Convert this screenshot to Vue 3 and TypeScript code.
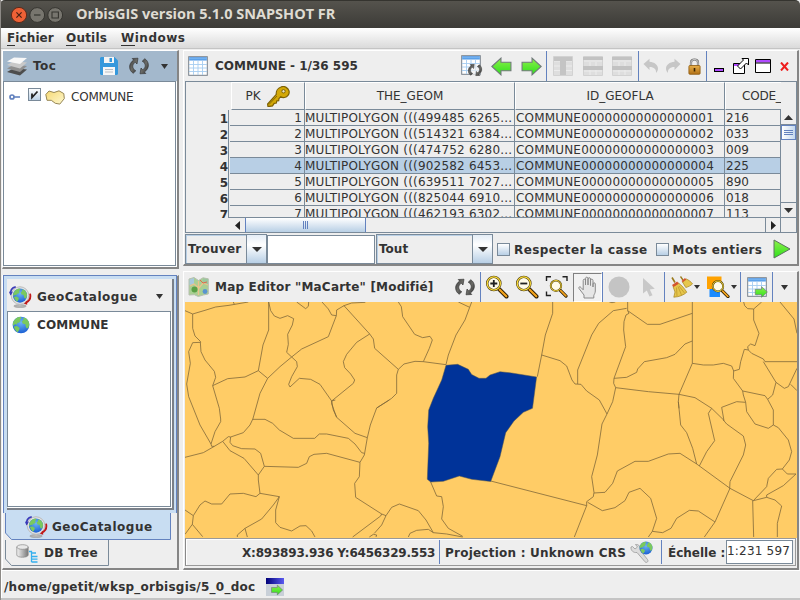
<script setup lang="ts">
interface Row {
  n: number
  geom: string
  id: string
  code: string
}

const rows: Row[] = [
  { n: 1, geom: '499485 6265', code: '216' },
  { n: 2, geom: '514321 6384', code: '033' },
  { n: 3, geom: '474752 6280', code: '009' },
  { n: 4, geom: '902582 6453', code: '225' },
  { n: 5, geom: '639511 7027', code: '890' },
  { n: 6, geom: '825044 6910', code: '018' },
  { n: 7, geom: '462193 6302', code: '113' },
].map((r) => ({
  n: r.n,
  geom: `MULTIPOLYGON (((${r.geom}...`,
  id: `COMMUNE0000000000000000${r.n}`,
  code: r.code,
}))

const selected = 4

// Boundary lines, one group per quadrant of the map, in thirds of a pixel.
const boundaries: { origin: string; lines: string[] }[] = [
  {
    origin: 'translate(180 265) scale(0.33333)',
    lines: [
      '15,137 38,147 75,136 107,126 147,121 205,111',
      '160,111 163,118',
      '38,147 38,190 45,213 61,229 62,232 38,233 26,260 31,295 20,357 26,395 60,480',
      '61,232 63,260 75,285 103,319 107,337 98,362 118,430 122,462',
      '98,362 143,341 195,336 235,317 263,340',
      '266,111 266,195 249,240 235,317',
      '266,111 272,137 283,153 300,160 323,152 341,161 337,180 323,208 325,238 320,262 335,276 350,290 352,305 335,335 326,358 330,366 358,340 392,343 420,358 455,408',
      '263,340 300,305 335,276 365,252 445,215 469,152 455,150 445,132 426,111',
      '263,340 240,385 218,464',
      '350,111 377,131 385,124 386,111',
      '469,152 470,135 492,122 515,114 556,112',
      '492,122 569,207 580,222 584,250 655,313 650,330 650,385 635,400 590,429 571,480',
      '569,207 530,232 500,268 490,290 494,308 512,327 524,345 520,355 455,408',
      '455,408 460,435 470,457',
      '655,313 672,297 705,289 730,290 798,299',
      '730,290 748,250 757,225 750,214 728,218 704,208 668,155 664,125 655,111',
      '835,111 869,127',
      '875,111 869,127 855,165 828,210 805,270 798,299',
    ],
  },
  {
    origin: 'translate(450 265) scale(0.33333)',
    lines: [
      '308,111 308,145 286,210 275,270 262,335',
      '275,270 330,287 350,303 366,345 375,357 393,358 410,378 448,405 471,447',
      '383,357 383,315 425,210 446,175 490,137 530,130',
      '533,111 533,137 592,178 630,178 727,145',
      '533,137 537,145 528,150 522,170 521,195 527,245 492,340 491,355 497,368 488,410 471,447',
      '478,111 486,113 496,111',
      '727,111 727,295',
      '492,340 530,337 560,322 563,312 583,290 650,278 675,268 705,237 727,228',
      '497,368 595,380 687,388',
      '727,295 687,388 685,410 687,430',
      '727,295 760,300 790,300 820,295 845,303 851,318 850,340 878,378 880,390 887,412',
      '687,388 735,398 785,430 822,466',
      '851,318 868,313 872,290 883,253 895,255 905,265 940,282 945,290 1041,290',
      '895,255 893,245 902,237 915,242 927,205 911,165 911,132 893,131 884,122 881,111',
      '911,132 935,111',
      '990,111 1032,162 1041,205',
      '940,290 978,352 1003,370 1015,365 1041,310',
      '1022,358 1041,377',
      '978,352 968,390 953,403',
      '878,378 945,392 953,403 970,435 970,480',
    ],
  },
  {
    origin: 'translate(180 400) scale(0.33333)',
    lines: [
      '60,75 93,132 105,95 122,65 122,57',
      '93,132 95,139 103,139 128,124 145,110 152,111 150,127 158,137 185,146 225,147 242,160 253,199 235,225 235,240 240,280',
      '15,172 70,158 103,139',
      '128,124 150,152 192,175 235,225',
      '152,111 190,98 210,75 218,58',
      '218,58 255,58 278,70 298,90 340,115 404,115 418,102 440,102 505,115 525,132 545,158 553,160',
      '253,199 355,202 380,190 388,170 402,163 440,160 540,187',
      '466,0 455,3 455,12 470,52 525,100 562,113',
      '571,75 562,113 553,165 540,187 538,230 524,250 527,292 605,342 618,347',
      '628,0 590,24',
      '15,330 40,347 37,373 15,403',
      '40,347 60,315 75,303 95,312 125,312 150,282 190,280 228,290 240,280 298,290',
      '37,373 68,410',
      '298,290 280,315 245,357 195,385 172,405 172,411',
      '195,385 202,411',
      '298,290 287,330 287,368 300,382 335,393 360,378 378,377 395,393 405,411',
      '518,411 602,348 605,342',
      '568,411 580,403 590,405 588,411',
      '583,400 605,375 618,347 635,322 658,312 715,332 738,360 760,398',
      '685,411 690,400 710,391 745,388 760,398 800,402 848,411',
      '752,246 770,288 785,290 790,320 785,357 805,385 848,409',
    ],
  },
  {
    origin: 'translate(480 400) scale(0.33333)',
    lines: [
      '32,243 320,317 283,411',
      '381,42 366,72 352,165 335,230 342,277 340,290 320,305 320,317',
      '342,279 375,277 398,250 412,213 465,184 505,184 565,162 600,160 650,192 750,265 820,302',
      '323,307 367,332 405,323 435,302 447,277 480,265 512,295 530,355 517,394 505,411',
      '517,394 548,398 573,385 590,355 628,331 655,333 705,366',
      '595,5 602,75 620,98 638,145 650,192',
      '658,198 680,155 704,122 685,40 695,25',
      '732,62 725,22 770,5 797,7 800,35 825,72 865,85 880,75',
      '730,60 740,72 790,108 797,135 790,165 750,245 749,267 705,366 673,411',
      '880,75 895,83 925,120 935,155 928,180 907,207 890,208 865,235 860,260 820,302',
      '907,207 922,222 948,222 910,257 860,285 860,292',
      '820,302 860,292 885,300 905,318 892,370 892,411',
      '818,302 821,411',
    ],
  },
]

const commune =
  '446,365.3 457.7,364.3 468.3,369.3 471.7,374.5 479,378.3 486,378.3 490,375 500,371.7 511.7,373 536.6,377 532.5,408.3 523.3,412.3 514,421 505.7,432.7 500,456.7 490.7,481.5 471.7,479.3 459.3,476 443.3,481.3 430.7,482 427.3,479.3 428.7,443.3 427.7,426.7 428.7,410 433.3,398.3 441.7,380'
</script>

<template>
  <div class="window">
    <svg class="defs" aria-hidden="true">
      <defs>
        <linearGradient id="gGreen" x1="0" y1="0" x2="0" y2="1">
          <stop offset="0" stop-color="#8df04a" /><stop offset="1" stop-color="#2ee01c" />
        </linearGradient>
        <linearGradient id="gDark" x1="0" y1="0" x2="1" y2="1">
          <stop offset="0" stop-color="#3a3a3a" /><stop offset=".5" stop-color="#6c6c68" /><stop offset="1" stop-color="#2c2c2c" />
        </linearGradient>
        <radialGradient id="gSea" cx=".5" cy=".35" r=".65">
          <stop offset="0" stop-color="#6db4f4" /><stop offset="1" stop-color="#1a5fd4" />
        </radialGradient>
        <linearGradient id="gPoly" x1="0" y1="0" x2="1" y2="1">
          <stop offset="0" stop-color="#f6d873" /><stop offset="1" stop-color="#fdf8d0" />
        </linearGradient>
        <linearGradient id="gBox" x1="0" y1="0" x2="0" y2="1">
          <stop offset="0" stop-color="#fff" /><stop offset="1" stop-color="#b8cfe5" />
        </linearGradient>
        <linearGradient id="gCyl" x1="0" y1="0" x2="1" y2="0">
          <stop offset="0" stop-color="#f4f4f4" /><stop offset="1" stop-color="#777" />
        </linearGradient>
        <linearGradient id="gNavy" x1="0" y1="0" x2="1" y2="0">
          <stop offset="0" stop-color="#000078" /><stop offset="1" stop-color="#5a5af0" />
        </linearGradient>
        <linearGradient id="gLock" x1="0" y1="0" x2="0" y2="1">
          <stop offset="0" stop-color="#e8b04a" /><stop offset="1" stop-color="#b06f16" />
        </linearGradient>
      </defs>
      <symbol id="refresh" viewBox="0 0 20 18">
        <g fill="url(#gDark)" stroke="#2f2f2f" stroke-width=".6">
          <path d="M9 1.200 3.200 1.500 4.600 3C1.800 5 .4 7.600.6 10.300c.2 2.400 1.500 4.600 3.600 6l2.600-2.500C4.900 12.900 3.900 11.400 3.800 9.600c-.1-1.800.8-3.400 2.400-4.400L8 7z" />
          <path d="m11 16.800 5.800-.3-1.400-1.500c2.800-2 4.200-4.600 4-7.300-.2-2.400-1.500-4.600-3.600-6l-2.600 2.500c1.900.9 2.900 2.400 3 4.200.1 1.800-.8 3.400-2.400 4.400L12 11z" />
        </g>
      </symbol>
      <symbol id="table" viewBox="0 0 20 20">
        <rect x=".7" y=".7" width="18.600" height="18.600" fill="#fff" stroke="#77808a" />
        <rect x="1.200" y="1.200" width="17.600" height="3.300" fill="#4b96e6" />
        <path d="M1.200 2.800h17.600" stroke="#83bcf3" />
        <path d="M1 8.500h18M1 12h18M1 15.500h18M5.500 5v14M10 5v14M14.500 5v14" stroke="#a6cdf0" stroke-width=".9" />
      </symbol>
      <symbol id="globe" viewBox="0 0 20 20">
        <circle cx="10" cy="10" r="9.300" fill="url(#gSea)" />
        <path d="M3 4.200C4.800 2 7 1 9.400.9l1.200 1.500-2 1.500 1 1.700-2 1.900-1.700.2-.6 2.100L3.600 9 1.300 11C.5 8.600 1.300 6 3 4.200zM2 11.700l3.600-.5 2.900 2-.6 2.400-1.600 2.400C4 16.700 2.600 14.500 2 11.700zM12.500 2l2.600.3c2.300 1.600 3.900 4 4.100 6.800l-.9 4-1.900.9-1.200-2.200-.4-2.600-2.700-.5-1.200-2.700 1.900-1.800z" fill="#7ac95e" />
      </symbol>
      <symbol id="catalog" viewBox="0 0 24 23">
        <ellipse cx="11.500" cy="21" rx="6.500" ry="1.600" fill="#b4b4b4" stroke="#8c8c8c" stroke-width=".5" />
        <path d="M10 17h3v4h-3z" fill="#bbb" />
        <circle cx="11.500" cy="10" r="9.200" fill="#e2e2e2" stroke="#b9b9b9" />
        <use href="#globe" x="3.500" y="2" width="16" height="16" />
        <path d="M2 9C.8 5 3 1.600 7 .9" fill="none" stroke="#3a3ab8" stroke-width="1.800" />
        <path d="M0 6h4L1.500 10z" fill="#3a3ab8" />
        <path d="M22 8c1 4-.5 7.500-4.500 9.500" fill="none" stroke="#c01818" stroke-width="1.900" />
        <path d="m15.500 18.500 3.500-3v4z" fill="#c01818" />
      </symbol>
      <symbol id="arrow" viewBox="0 0 20 18">
        <path d="M19.200 9 10.500 1v4H1v8h9.500v4z" fill="url(#gGreen)" stroke="#70777a" />
      </symbol>
      <symbol id="lens" viewBox="0 0 24 24">
        <path d="m14 14 7.500 7.500" stroke="#2a1c00" stroke-width="4" stroke-linecap="round" />
        <path d="m14.500 14.500 6.800 6.800" stroke="#f3a31c" stroke-width="2.200" stroke-linecap="round" />
        <circle cx="8.800" cy="8.500" r="6.600" fill="#fffbe8" stroke="#4a3b10" stroke-width="2.400" />
        <circle cx="8.800" cy="8.500" r="6.600" fill="none" stroke="#ffe03a" stroke-width="1.200" />
      </symbol>
      <symbol id="undo" viewBox="0 0 16 16">
        <path d="M.5 6 6.500.8v3c5 .2 8.500 3.200 8.500 7 0 1.500-.8 3-2 4.200.5-3.500-1.800-6-6.500-6v3z" fill="#c6c6c6" />
      </symbol>
      <symbol id="caret" viewBox="0 0 10 5" preserveAspectRatio="none"><path d="M0 0h10L5 5z" fill="#333" /></symbol>
    </svg>

    <header class="titlebar">
      <svg class="wm" viewBox="0 0 54 18">
        <circle cx="9" cy="9" r="7.600" fill="#ee6136" stroke="#5f2a1a" />
        <path d="m6.400 6.400 5.200 5.200m0-5.200-5.200 5.200" stroke="#472014" stroke-width="1.200" />
        <circle cx="27.200" cy="9" r="7.400" fill="#77756e" stroke="#35342f" />
        <path d="M24 9h6.500" stroke="#35342f" stroke-width="1.200" />
        <circle cx="45.200" cy="9" r="7.400" fill="#77756e" stroke="#35342f" />
        <path d="M42 6h6.400v6H42z" fill="none" stroke="#35342f" stroke-width="1.100" />
      </svg>
      <h1>OrbisGIS version 5.1.0 SNAPSHOT FR</h1>
    </header>

    <nav class="menubar">
      <span class="m1"><u>F</u>ichier</span><span class="m2"><u>O</u>utils</span><span class="m3"><u>W</u>indows</span>
    </nav>

    <main>
      <section class="side">
        <div class="panel toc">
          <div class="head active">
            <svg width="22" height="19" viewBox="0 0 22 19">
              <path d="m1 15 7-4 13 1.500-7 6z" fill="#4d4d4d" />
              <path d="m1 11.500 7-4 13 1.500-7 6z" fill="#8f8f8f" />
              <path d="m1 8 7-4 13 1.500-7 6z" fill="#c9c9c9" />
              <path d="m1 4.500 7-4L21 1l-7 6z" fill="#f8f8f8" />
            </svg>
            <b class="t-toc">Toc</b>
            <svg class="save" width="18" height="18" viewBox="0 0 18 18">
              <path d="M1 0h13.500L18 3.500V17l-1 1H1l-1-1V1z" fill="#3598dc" />
              <path d="M4 0h10v6H4z" fill="#f4f4f4" /><path d="M9.500 1h2.500v4H9.500z" fill="#3598dc" />
              <path d="M3 10h12v8H3z" fill="#f7f7f7" /><path d="M5 12.500h8M5 15h8" stroke="#b9bec4" />
            </svg>
            <svg class="ref" width="20" height="18"><use href="#refresh" /></svg>
            <svg class="car" width="7" height="5"><use href="#caret" /></svg>
          </div>
          <div class="list">
            <div class="tocrow">
              <svg width="12" height="8" viewBox="0 0 12 8">
                <circle cx="3" cy="4" r="2" fill="#fff" stroke="#6382bf" stroke-width="1.700" /><path d="M5 4h6" stroke="#6382bf" stroke-width="1.600" />
              </svg>
              <svg class="check" width="13" height="13" viewBox="0 0 13 13">
                <rect x=".5" y=".5" width="12" height="12" fill="url(#gBox)" stroke="#7a8a99" />
                <path d="M4 5.500v4L9.500 3.500" fill="none" stroke="#222" stroke-width="1.800" />
              </svg>
              <svg class="poly" width="20" height="15" viewBox="0 0 20 15">
                <path d="M.8 4.500 4 1l5 1.500L14 .8l4.800 2.800.5 5-4.500 5.500-4.500-.8-4-3H2z" fill="url(#gPoly)" stroke="#968654" />
              </svg>
              <span class="plain">COMMUNE</span>
            </div>
          </div>
        </div>

        <div class="panel dock">
          <div class="focus">
            <div class="inner">
              <div class="head">
                <svg width="23" height="22"><use href="#catalog" /></svg>
                <b class="t-geo">GeoCatalogue</b>
                <svg class="car2" width="7" height="5"><use href="#caret" /></svg>
              </div>
              <div class="list geo">
                <svg width="18" height="18"><use href="#globe" /></svg><b>COMMUNE</b>
              </div>
            </div>
          </div>
          <div class="tab first">
            <svg class="shape" width="166" height="27" viewBox="0 0 166 27"><path d="M.5 0v20l6 6.500H165.500V0" fill="#c8ddf2" stroke="#6382bf" /></svg>
            <svg class="ico" width="23" height="22"><use href="#catalog" /></svg><b class="t-geo">GeoCatalogue</b>
          </div>
          <div class="tab second">
            <svg class="shape" width="104" height="26" viewBox="0 0 104 26"><path d="M.5 0v19l6 6.500H103.500V0" fill="#eee" stroke="#7a8a99" /></svg>
            <svg class="ico" width="22" height="19" viewBox="0 0 22 19">
              <path d="M.8 3v8c0 3 11.400 3 11.400 0V3z" fill="url(#gCyl)" stroke="#888" stroke-width=".7" />
              <ellipse cx="6.500" cy="3" rx="5.700" ry="2.300" fill="#e8e8e8" stroke="#888" stroke-width=".7" />
              <path d="M13 7.500h2.500V18M15.500 9H20M15.500 12.500h6M15.500 15.200h6M15.500 18h6" fill="none" stroke="#35b0ee" stroke-width="1.300" />
            </svg>
            <b>DB Tree</b>
          </div>
        </div>
      </section>

      <section class="work">
        <div class="panel table">
          <div class="head thead">
            <svg class="i-tab" width="20" height="20"><use href="#table" /></svg>
            <b class="name">COMMUNE - 1/36 595</b>
            <svg width="22" height="22" viewBox="0 0 22 22">
              <use href="#table" width="20" height="20" />
              <circle cx="14.500" cy="15" r="6" fill="#eee" opacity=".7" /><use href="#refresh" x="6.500" y="8.500" width="15" height="13" />
            </svg>
            <svg class="flip" width="21" height="19"><use href="#arrow" /></svg>
            <svg width="21" height="19"><use href="#arrow" /></svg>
            <i class="sep" />
            <svg width="20" height="20" viewBox="0 0 20 20"><path d="M.5.5h19v19H.5z" fill="#dedede" stroke="#d2d2d2" /><path d="M1 5h18M1 10h18M1 14.500h18" stroke="#ececec" /><path d="M1 1h18v4H13v14H7V5H1z" fill="#c4c4c4" /></svg>
            <svg width="20" height="20" viewBox="0 0 20 20"><path d="M.5.5h19v19H.5z" fill="#dedede" stroke="#d2d2d2" /><path d="M1 5h18M1 15h18M7 6v13M13 6v13" stroke="#ececec" /><path d="M0 1h20v3H0zM0 10h20v4H0z" fill="#c2c2c2" /></svg>
            <svg width="20" height="20" viewBox="0 0 20 20"><path d="M.5.5h19v19H.5z" fill="#dedede" stroke="#d2d2d2" /><path d="M1 5h18M1 15h18M7 6v13M13 6v13" stroke="#ececec" /><path d="M0 1h20v3H0zM0 10h20v4H0z" fill="#c2c2c2" /></svg>
            <i class="sep" />
            <svg width="16" height="16"><use href="#undo" /></svg>
            <svg class="flip" width="16" height="16"><use href="#undo" /></svg>
            <svg width="13" height="17" viewBox="0 0 13 17">
              <path d="M3 9V4.500C3 .5 10 .5 10 4.500V9" fill="none" stroke="#6d6d6d" stroke-width="2.200" /><path d="M3 9V4.500C3 .5 10 .5 10 4.500V9" fill="none" stroke="#ddd" stroke-width="1" />
              <rect x=".9" y="7.500" width="11.200" height="8.800" rx="1" fill="url(#gLock)" stroke="#8d5a10" stroke-width=".8" />
              <path d="M6.500 10v3.500" stroke="#3a2400" stroke-width="1.600" />
            </svg>
            <i class="sep" />
            <svg class="min" width="10" height="5" viewBox="0 0 10 5"><rect x=".5" y=".5" width="9" height="3" fill="#b04aff" stroke="#000" /></svg>
            <svg width="16" height="16" viewBox="0 0 16 16"><path d="M.5 5.500h11v10H.5z" fill="#fff" stroke="#000" /><path d="M1 6h10v2H1z" fill="#b04aff" /><path d="M9 .5h6.500V7l-2-2-6 6-3-3 6-6z" fill="#fff" stroke="#000" /></svg>
            <svg width="16" height="14" viewBox="0 0 16 14"><path d="M.5.5h15v13H.5z" fill="#fff" stroke="#000" /><path d="M1 1h14v2.500H1z" fill="#b04aff" /><path d="M1 4h14" stroke="#000" /></svg>
            <svg width="9" height="9" viewBox="0 0 9 9"><path d="m1 .5 7 8M8 .5l-7 8" stroke="#ee1c1c" stroke-width="2" /></svg>
          </div>

          <div class="grid">
            <div class="corner" />
            <div class="cols">
              <div class="th">PK
                <svg width="23" height="21" viewBox="0 0 23 21">
                  <path d="M14 1c3-1.500 7 .5 8 3.800.8 3.200-1.500 6.200-4.500 6.700-1.500.2-2.800 0-3.800-.7l-1.800 1.900-.2 2-2 .3-.3 2-2.200.4-1.700 2.500-4.500.8L.6 18l8.700-9.600C8.800 5 11 2 14 1z" fill="#d3a806" stroke="#7d6104" stroke-width="1.200" /><circle cx="16.500" cy="5.300" r="1.700" fill="#e9e2c4" stroke="#7d6104" /><path d="m2 18.500 8-8.500" stroke="#8d6e04" />
                </svg>
              </div>
              <div class="th">THE_GEOM</div>
              <div class="th">ID_GEOFLA</div>
              <div class="th code">CODE_</div>
            </div>
            <div class="corner" />
            <div class="nums"><div v-for="r in rows" :key="r.n">{{ r.n }}</div></div>
            <div class="body">
              <div v-for="r in rows" :key="r.n" class="tr" :class="{ sel: r.n === selected }">
                <span class="num">{{ r.n }}</span><span class="g">{{ r.geom }}</span><span class="id">{{ r.id }}</span><span class="c">{{ r.code }}</span>
              </div>
            </div>
            <div class="vbar">
              <div class="ar up"><svg width="9" height="5"><use href="#caret" /></svg></div>
              <div class="vthumb"><i /><i /><i /></div>
              <div class="ar down"><svg width="9" height="5"><use href="#caret" /></svg></div>
            </div>
            <div class="corner" />
            <div class="hbar">
              <div class="har"><svg width="5" height="9" viewBox="0 0 5 9"><path d="M5 0v9L0 4.500z" fill="#222" /></svg></div>
              <div class="hthumb"><i /><i /><i /></div>
              <div class="har end"><svg width="5" height="9" viewBox="0 0 5 9"><path d="M0 0v9l5-4.500z" fill="#222" /></svg></div>
            </div>
            <div class="corner br" />
          </div>

          <div class="find">
            <div class="combo c1"><b>Trouver</b><span><svg width="10" height="5"><use href="#caret" /></svg></span></div>
            <div class="field" />
            <div class="combo c2"><b>Tout</b><span><svg width="10" height="5"><use href="#caret" /></svg></span></div>
            <i class="box" /><b class="t-case">Respecter la casse</b>
            <i class="box b2" /><b class="t-word">Mots entiers</b>
            <svg class="go" width="18" height="20" viewBox="0 0 18 20"><path d="M1 1v18l16-9z" fill="url(#gGreen)" stroke="#5c7260" /></svg>
          </div>
        </div>

        <div class="panel mapp">
          <div class="head mhead">
            <svg class="i-map" width="21" height="20" viewBox="0 0 21 20">
              <path d="m1 2 5-1.500 4.500 3L15 .8l5.300 1V17l-5 1-5 1.500-4-1.800L1 18z" fill="#a9cf93" stroke="#b7bfb0" />
              <path d="m1.500 2.500 4.500-1.500v6L1.500 8z" fill="#a8c8de" /><path d="m15 1.500 5 .8v5l-5-1z" fill="#9bc7a0" />
              <path d="m2 9 4-2 5 4 4-5 5 2M10.500 4v14" fill="none" stroke="#eac28c" stroke-width="1.300" />
              <path d="m12 3 3 3 4-1" fill="none" stroke="#dc6a4c" /><circle cx="6.500" cy="12.500" r="3" fill="#5aa046" /><circle cx="17" cy="14.500" r="2.400" fill="#5a94d0" />
            </svg>
            <b class="t-map">Map Editor "MaCarte" [Modifié]</b>
            <svg class="r" width="20" height="18"><use href="#refresh" /></svg>
            <i class="sep" />
            <svg width="24" height="24" viewBox="0 0 24 24"><use href="#lens" /><path d="M5.300 8.500h7M8.800 5v7" stroke="#222" stroke-width="1.800" /></svg>
            <svg width="24" height="24" viewBox="0 0 24 24"><use href="#lens" /><path d="M5.300 8.500h7" stroke="#222" stroke-width="1.800" /></svg>
            <svg width="24" height="24" viewBox="0 0 24 24"><path d="M1.500 6V1.800H6M17.500 1.800H22V6M1.500 16.500v4H6" fill="none" stroke="#222" stroke-width="1.400" /><use href="#lens" x="4" y="4" width="19" height="19" /></svg>
            <div class="pressed">
              <svg width="20" height="23" viewBox="0 0 20 23">
                <path d="M6 22v-3L1 12.500c-.8-1.500 1-2.300 2-1l2.200 2.300V4.500c0-1.800 2.300-1.800 2.300 0V9 2.500C7.500.7 10 .7 10 2.500V9 3c0-1.800 2.500-1.800 2.500 0v6.500-5c0-1.800 2.500-1.800 2.500 0V11 8c0-1.600 2.300-1.600 2.300 0v7c0 2-1 3-1.500 4.500V22z" fill="#e6e6e6" stroke="#8a8a8a" />
              </svg>
            </div>
            <i class="sep" />
            <svg width="22" height="22" viewBox="0 0 22 22"><circle cx="11" cy="11" r="10.500" fill="#c4c4c4" /></svg>
            <svg width="14" height="19" viewBox="0 0 14 19"><path d="M1 0v15.500l3.800-3 2.700 6 3-1.300-2.700-5.800 5-.6z" fill="#c8c8c8" /></svg>
            <i class="sep" />
            <svg class="broom" width="24" height="22" viewBox="0 0 24 22">
              <path d="m3 1.500 3 5" stroke="#9a7a1c" stroke-width="1.600" />
              <path d="M4 10.500 9.500 7c3 2.200 6 5.500 8.300 9.200-3.300 2.900-7.500 4.700-13 5L6 16z" fill="#e6c64c" stroke="#a48320" stroke-width=".7" />
              <path d="m7.500 11.500.5 8.500M9 10.500l3.500 8.500M10 10l5.500 7" stroke="#b08c24" stroke-width=".6" />
              <path d="m3 9 5.200-3.500 1.600 2.200L4.500 11z" fill="#d4542c" />
              <path d="m11.500.5 2.500 3.500" stroke="#9a7a1c" stroke-width="1.300" />
              <path d="m13.500 6 3.800-3c2 .8 4.500 2.500 6.200 4.800-1.700 1.800-4 3-6.700 3.700z" fill="#e6c64c" stroke="#a48320" stroke-width=".7" />
              <path d="m12.500 5 3.500-3 1.300 1.500-3.500 2.800z" fill="#d4542c" />
            </svg>
            <svg width="6" height="4"><use href="#caret" /></svg>
            <svg class="layers" width="23" height="22" viewBox="0 0 23 22"><path d="M0 .5h14.500V13H0z" fill="#ffa200" /><path d="M2.500 13H13v8H2.500z" fill="#1b8bff" /><use href="#lens" x="4" y="3.500" width="19" height="19" /></svg>
            <svg width="6" height="4"><use href="#caret" /></svg>
            <i class="sep" />
            <svg class="exp" width="22" height="21" viewBox="0 0 22 21"><use href="#table" width="20" height="20" /><use href="#arrow" x="7" y="9" width="14.500" height="12" /></svg>
            <i class="sep" />
            <svg width="7" height="5"><use href="#caret" /></svg>
          </div>

          <svg class="map" width="612" height="236" viewBox="185 302 612 236">
            <rect x="185" y="302" width="612" height="236" fill="#ffcc66" />
            <g v-for="(b, i) in boundaries" :key="i" :transform="b.origin" class="lines">
              <polyline v-for="(p, j) in b.lines" :key="j" :points="p" />
            </g>
            <polygon :points="commune" fill="#003399" stroke="#57584e" stroke-width=".5" />
          </svg>

          <div class="coords">
            <b class="xy">X:893893.936 Y:6456329.553</b><i class="sep" />
            <b class="proj">Projection : Unknown CRS</b>
            <svg class="wrench" width="23" height="23" viewBox="0 0 23 23">
              <path d="m1 6 1.500-.5L5 8l2.500-2L5.500 3.500C9 3 11 6 10 9l7.500 9.500c1.500 2-1 4-2.500 2.300L7 11.500C3.500 12 .5 9.500 1 6z" fill="#dcdcdc" stroke="#999" stroke-width=".8" />
              <use href="#globe" x="9" y="0" width="14" height="14" />
            </svg>
            <i class="sep" /><b class="ech">Échelle :</b><span class="scale">1:231 597</span>
          </div>
        </div>
      </section>
    </main>

    <footer>
      <b>/home/gpetit/wksp_orbisgis/5_0_doc</b>
      <svg width="18" height="18" viewBox="0 0 18 18"><path d="M0 0h18v18H0z" fill="#c9d0d8" /><path d="M0 0h18v6H0z" fill="url(#gNavy)" /><use href="#arrow" x="4" y="6.500" width="14" height="11" /></svg>
    </footer>
  </div>
</template>

<style>
body {
  background: #eee;
}
</style>

<style scoped>
* {
  box-sizing: border-box;
}
svg {
  display: block;
  flex: none;
}
.defs {
  position: absolute;
  width: 0;
  height: 0;
}
.window {
  width: 800px;
  height: 600px;
  overflow: hidden;
  display: flex;
  flex-direction: column;
  background: #eee;
  border-left: 1px solid #8d8a86;
  font: 12px/16px 'DejaVu Sans', sans-serif;
  color: #333;
  white-space: pre;
}
.titlebar {
  height: 28px;
  flex: none;
  margin-left: -1px;
  display: flex;
  align-items: center;
  padding: 0 0 0 10px;
  background: linear-gradient(#55534d, #3c3b37);
  border-top: 1px solid #35342f;
  border-radius: 5px 5px 0 0;
}
.wm {
  width: 54px;
  height: 18px;
}
h1 {
  margin: -1px 0 0 12px;
  font: bold 14.5px/20px 'Open Sans', sans-serif;
  color: #dfdbd2;
}
.menubar {
  height: 21px;
  flex: none;
  display: flex;
  background: linear-gradient(#fff, #dadada);
  border-bottom: 1px solid #c4c4c4;
  font-weight: bold;
  padding: 2px 0 0 6px;
}
.menubar u {
  text-decoration: none;
  border-bottom: 1px solid #333;
}
.menubar span { height: 14px; line-height: 16px; }
.m1 { width: 59px; letter-spacing: 0.1px; }
.m2 { width: 55px; letter-spacing: 0.2px; }
.m3 { letter-spacing: 0.5px; }
main {
  height: 521px;
  flex: none;
  display: flex;
  padding: 1px 0 0 1px;
  gap: 4px;
}
.side {
  width: 177px;
  display: flex;
  flex-direction: column;
  gap: 6px;
}
.work {
  width: 616px;
  display: flex;
  flex-direction: column;
  gap: 5px;
}
.panel {
  border: 1px solid #fff;
  border-right: 2px solid #858585;
  border-bottom: 2px solid #858585;
  display: flex;
  flex-direction: column;
}
.toc { height: 219px; }
.head {
  height: 30px;
  flex: none;
  display: flex;
  align-items: center;
}
.active {
  background: #a3b8cc;
  padding-left: 3px;
}
.t-toc { margin-left: 5px; letter-spacing: 0.5px; width: 67px; }
.ref { margin-left: 11px; }
.car { margin-left: 12px; }
.list {
  flex: 1;
  background: #fff;
  border: 1px solid #7a8a99;
  margin-right: 1px;
  margin-bottom: 1px;
  box-shadow: 1px 1px #fff;
}
.tocrow {
  display: flex;
  align-items: center;
  padding: 7px 0 0 5px;
}
.check { margin: -6px 0 0 7px; }
.poly { margin-left: 4px; }
.plain { margin-left: 6px; letter-spacing: -0.2px; }
.dock { height: 295px; }
.focus {
  height: 238px;
  flex: none;
  background: #c8ddf2;
  border: 1px solid #6382bf;
  border-bottom: 0;
  padding: 3px 2px 3px 3px;
  margin: -1px 0 0;
}
.inner {
  height: 100%;
  border: 2px solid #7a8088;
  border-width: 0 2px 2px 0;
  background: #eee;
  display: flex;
  flex-direction: column;
  padding-top: 3px;
}
.inner .head { padding-left: 2px; height: 29px; }
.t-geo { letter-spacing: 0.5px; }
.inner .t-geo { margin-left: 5px; width: 119px; }
.geo {
  display: flex;
  align-items: flex-start;
  padding: 4px 0 0 4px;
  gap: 7px;
}
.geo b { line-height: 19px; letter-spacing: 0.1px; }
.tab {
  position: relative;
  display: flex;
  align-items: center;
  margin-left: 2px;
}
.tab > * { position: relative; }
.tab .shape { position: absolute; left: 0; top: 0; }
.first { height: 27px; width: 166px; padding-left: 20px; }
.first b { margin-left: 4px; }
.second { height: 26px; padding-left: 11px; }
.second b { margin-left: 6px; letter-spacing: 0.2px; }

.table { height: 216px; }
.sep {
  width: 1px;
  height: 100%;
  background: #6382bf;
  justify-self: center;
}
.flip { transform: scaleX(-1); }
.thead {
  display: grid;
  grid-template-columns: 20px 249px 30px 29px 30px 1px 32px 27px 32px 1px 24px 20px 23px 1px 24px 20px 24px 18px;
  justify-items: center;
  padding-left: 4px;
}
.thead .name { justify-self: start; margin-left: 7px; }
.min { margin-top: 8px; }
.grid {
  height: 152px;
  flex: none;
  width: 612px;
  margin-left: 1px;
  border: 1px solid #7a8a99;
  display: grid;
  grid-template: 28px 108px 14px / 43px 552px 15px;
}
.cols, .tr {
  display: grid;
  grid-template-columns: 76px 210px 210px 56px;
}
.cols { border-left: 2px solid #eee; overflow: hidden; grid-template-columns: 74px 210px 210px 56px; }
.th {
  display: flex;
  align-items: center;
  justify-content: center;
  border: 1px solid #fff;
  border-right-color: #7a8a99;
  border-bottom-color: #7a8a99;
  gap: 3px;
  overflow: hidden;
}
.th.code { justify-content: flex-start; padding-left: 16px; border-right: 0; letter-spacing: -0.2px; }
.nums {
  overflow: hidden;
  text-align: right;
  font-weight: bold;
  border-right: 1px solid #7a8a99;
}
.nums div { height: 16px; line-height: 18px; }
.body { overflow: hidden; border-bottom: 1px solid #7a8a99; padding-left: 1px; border-right: 1px solid #7a8a99; }
.tr { height: 16px; grid-template-columns: 75px 210px 210px 56px; }
.tr span {
  border-right: 1px solid #7a8a99;
  border-bottom: 1px solid #7a8a99;
  overflow: hidden;
  line-height: 16px;
  padding-left: 1px;
}
.tr .c { border-right: 0; }
.tr .num { text-align: right; padding-right: 2px; }
.tr .g { letter-spacing: 0.2px; padding-left: 0; }
.id { letter-spacing: 0.18px; }
.sel { background: #b8cfe5; }
.vbar { display: flex; flex-direction: column; align-items: stretch; border-bottom: 1px solid #7a8a99; }
.ar { height: 15px; display: flex; align-items: center; justify-content: center; }
.up { border-bottom: 1px solid #7a8a99; }
.up svg { transform: scaleY(-1); }
.down { border-top: 1px solid #7a8a99; margin-top: auto; }
.vthumb {
  height: 15px;
  border: 1px solid #6382bf;
  background: linear-gradient(90deg, #fff, #c3d8ee);
  display: flex;
  flex-direction: column;
  align-items: center;
  justify-content: center;
  gap: 1px;
}
.vthumb i { width: 9px; height: 1px; background: #6382bf; }
.hbar { display: flex; background: #eee; }
.har { width: 16px; display: flex; align-items: center; justify-content: center; }
.end { margin-left: auto; border: solid #7a8a99; border-width: 0 1px; width: 16px; }
.hthumb {
  width: 121px;
  border: solid #6382bf;
  border-width: 0 1px;
  background: linear-gradient(#fff, #b8cfe5);
  display: flex;
  align-items: center;
  justify-content: center;
  gap: 1px;
}
.hthumb i { width: 1px; height: 8px; background: #6382bf; }
.find { display: flex; align-items: center; padding: 1px 0 0 1px; height: 31px; }
.combo {
  height: 30px;
  border: 1px solid #7a8a99;
  box-shadow: inset 1px 1px #b8cfe5;
  display: flex;
  align-items: center;
}
.combo b { padding-left: 2px; flex: 1; margin-top: -1px; }
.combo span {
  width: 20px;
  height: 28px;
  border-left: 1px solid #7a8a99;
  background: linear-gradient(#e4edf6, #fff 35%, #b8cfe5);
  display: flex;
  align-items: center;
  justify-content: center;
}
.c1 { width: 82px; letter-spacing: 0.3px; }
.c2 { width: 117px; margin-left: 1px; }
.field { width: 108px; height: 29px; border: 1px solid #7a8a99; background: #fff; margin-left: 0; }
.box { width: 13px; height: 13px; border: 1px solid #7a8a99; background: linear-gradient(#fff, #b8cfe5); margin: 0 4px 0 4px; }
.find > b { margin-top: 1px; }
.b2 { margin-left: 8px; }
.t-case { letter-spacing: 0.4px; }
.t-word { letter-spacing: 0.4px; }
.go { margin-left: 11px; }

.mapp { height: 299px; }
.mhead {
  display: grid;
  grid-template-columns: 21px 241px 30px 1px 32px 28px 32px 29px 1px 31px 30px 1px 31px 2px 33px 5px 9px 27px 1px 23px;
  justify-items: center;
  padding-left: 4px;
}
.mhead .t-map { justify-self: start; margin-left: 6px; letter-spacing: 0.2px; }
.layers { margin-left: 7px; }
.exp { margin-right: 2px; }
.pressed {
  width: 29px;
  height: 29px;
  border: 1px solid #808080;
  border-right-color: #fff;
  border-bottom-color: #fff;
  background: #f2f2f2;
  display: flex;
  align-items: center;
  justify-content: center;
}
.map { margin-left: 1px; }
.lines polyline {
  fill: none;
  stroke: #80683a;
  stroke-width: 0.8;
  vector-effect: non-scaling-stroke;
}
.coords {
  width: 611px;
  height: 28px;
  margin-left: 1px;
  border: 1px solid #999;
  border-left-color: #888;
  display: flex;
  align-items: center;
  box-shadow: inset 1px 1px #fff;
}
.coords b { margin-top: 1px; }
.coords .sep { height: 24px; }
.xy { width: 197px; margin-left: 56px; letter-spacing: -0.2px; }
.proj { margin-left: 5px; width: 185px; letter-spacing: 0.23px; }
.wrench { margin: 0 8px 0 0; }
.ech { margin-left: 6px; width: 58px; }
.scale {
  width: 67px;
  height: 24px;
  line-height: 21px;
  border: 1px solid #7a8a99;
  background: #fff;
  letter-spacing: 0.2px;
}
footer {
  height: 30px;
  flex: none;
  border-bottom: 2px solid #c4c4c4;
  box-shadow: inset 1px 1px #fff;
  display: flex;
  align-items: center;
  padding: 6px 0 0 3px;
  gap: 11px;
  letter-spacing: 0.24px;
}
</style>
